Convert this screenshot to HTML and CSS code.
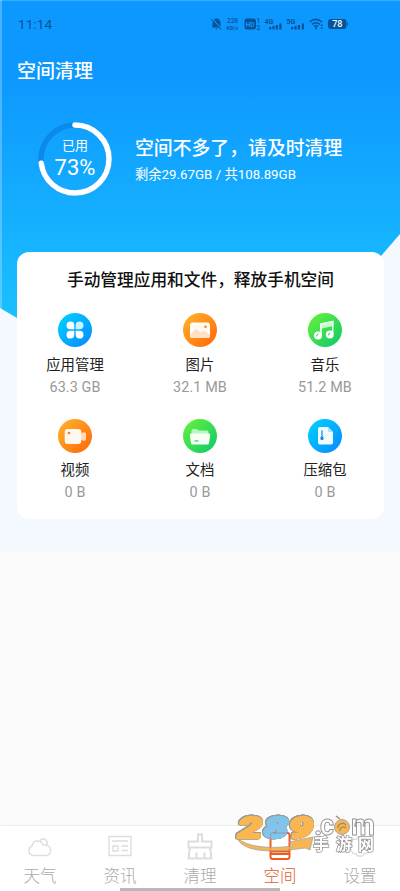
FILE: index.html
```html
<!DOCTYPE html>
<html lang="zh-CN">
<head>
<meta charset="utf-8">
<meta name="viewport" content="width=device-width, initial-scale=1">
<title>空间清理</title>
<link rel="stylesheet" href="styles.css">
</head>
<body>
<svg class="defs" width="0" height="0" aria-hidden="true">
  <defs>
    <linearGradient id="blue" x1="0" y1="0" x2="1" y2="1"><stop offset="0" stop-color="#00d5ff"/><stop offset="1" stop-color="#0588ff"/></linearGradient>
    <linearGradient id="orange" x1="0" y1="0" x2="1" y2="1"><stop offset="0" stop-color="#ffb52e"/><stop offset="1" stop-color="#ff6508"/></linearGradient>
    <linearGradient id="green" x1="0" y1="0" x2="1" y2="1"><stop offset="0" stop-color="#6af238"/><stop offset="1" stop-color="#0bc96c"/></linearGradient>
  </defs>
</svg>
<div class="app">
  <main class="page">
    <svg class="backdrop" viewBox="0 0 400 340" aria-hidden="true">
      <defs><linearGradient id="sky" x1="0" y1="0" x2="0" y2="1"><stop offset="0.22" stop-color="#0d98ff"/><stop offset="1" stop-color="#1cc3ff"/></linearGradient></defs>
      <path d="M0 0H400V234L381 256Q320 330 200 340Q80 340 17 318L0 308Z" fill="url(#sky)"/>
      <path d="M0 .5H400" stroke="#35b1fa"/>
    </svg>
    <header class="status">
      <span class="clock">11:14</span>
      <svg class="indicators" width="140" height="14" viewBox="0 0 140 14" fill="#075398">
        <path d="M2.500 9.500V5.500Q3 1.800 6.500 1.500Q10 1.800 10.500 5.500V9.500L11.500 10.500H1.500ZM5 11.500H8L6.500 12.800Z"/>
        <path d="M1.500 1.500L11.500 12" stroke="#0d98ff" stroke-width="1.500"/><path d="M1 1.800L11.500 12.800" stroke="#075398"/>
        <text x="22.500" y="6.300" class="tiny" text-anchor="middle">228</text>
        <text x="22.500" y="12.800" class="rate" text-anchor="middle">KB/s</text>
        <rect x="34.500" y="1.500" width="11.500" height="11" rx="2.500"/>
        <text x="40.200" y="9.500" class="hd" text-anchor="middle">HD</text>
        <text x="46.500" y="6.300" class="tiny">1</text><text x="46.500" y="12.800" class="tiny">2</text>
        <text x="54.500" y="7" class="net">4G</text>
        <path d="M59 10h2.200v2.500H59zM62.400 9h2.200v3.500h-2.200zM65.800 8H68v4.500h-2.200zM69.300 6.500h2.200v6h-2.200z"/>
        <text x="76.500" y="7" class="net">5G</text>
        <path d="M81 10h2.200v2.500H81zM84.400 9h2.200v3.500h-2.200zM87.800 8H90v4.500h-2.200zM91.800 6.500H94v6h-2.200z"/>
        <g fill="none" stroke="#075398" stroke-width="1.500"><path d="M99.500 5Q105.500-.2 112 5M101.800 7.400Q105.700 4 110 7.400M104 9.500Q106 8 108 9.500"/></g>
        <circle cx="106" cy="11.300" r="1.100"/><path d="M111.700 7l1.300 2h-2.600zM111.700 12.500l1.300-2h-2.600z"/>
        <rect x="118" y="2" width="18.500" height="10" rx="3"/><path d="M137 5q1 0 1 2t-1 2z"/>
        <text x="127.300" y="10.300" class="battery" text-anchor="middle">78</text>
      </svg>
    </header>
    <h1 class="title">空间清理</h1>
    <section class="summary">
      <div class="ring">
        <svg class="ring-track" width="74" height="74" viewBox="0 0 74 74" fill="none" stroke-width="5.500">
          <circle cx="37" cy="37" r="34" stroke="#0c8ae9"/>
          <circle cx="37" cy="37" r="34" stroke="#fff" stroke-linecap="round" pathLength="100" stroke-dasharray="73 100" transform="rotate(-90 37 37)"/>
        </svg>
        <span class="ring-label">已用</span>
        <span class="ring-value">73%</span>
      </div>
      <div class="message">
        <h2>空间不多了，请及时清理</h2>
        <p>剩余29.67GB / 共108.89GB</p>
      </div>
    </section>
    <section class="card">
      <h3>手动管理应用和文件，释放手机空间</h3>
      <div class="grid">
        <div class="item">
          <svg width="34" height="34" viewBox="0 0 34 34"><circle cx="17" cy="17" r="17" fill="url(#blue)"/><g fill="#fff"><path d="M16.300 16.300V12.500a3.900 3.900 0 1 0-3.900 3.800zM16.300 17.700V21.500a3.900 3.900 0 1 1-3.900-3.800zM17.700 17.700V21.500a3.900 3.900 0 1 0 3.900-3.800z"/><path d="M17.700 16.300V12.500a3.900 3.900 0 1 1 3.900 3.800z" fill="#c9f1ff"/></g></svg>
          <span class="name">应用管理</span><span class="size">63.3 GB</span>
        </div>
        <div class="item">
          <svg width="34" height="34" viewBox="0 0 34 34"><circle cx="17" cy="17" r="17" fill="url(#orange)"/><rect x="7" y="9.500" width="20" height="15.500" rx="2.500" fill="#fffaf3"/><path d="M7 22L13 15.500L18 19.500L21 17.500L27 22V22.500a2.500 2.500 0 0 1-2.500 2.500h-15A2.500 2.500 0 0 1 7 22.500z" fill="#ffe0c5"/><circle cx="22.500" cy="13.700" r="1.300" fill="#ff8617"/></svg>
          <span class="name">图片</span><span class="size">32.1 MB</span>
        </div>
        <div class="item">
          <svg width="34" height="34" viewBox="0 0 34 34"><circle cx="17" cy="17" r="17" fill="url(#green)"/><path d="M12 10.500L25.500 8V13L14 15.500V22H12z" fill="#c9f8cf"/><path d="M12.700 22V11L24.700 8.500V21" fill="none" stroke="#e8ffed" stroke-width="1.500"/><circle cx="10" cy="22.500" r="4" fill="#fff"/><circle cx="21.800" cy="21.500" r="3.900" fill="#fff"/><path d="M8.500 23.300q.2-2 2-2.300M20.300 22.300q.2-2 2-2.300" stroke="#26cf60" fill="none"/></svg>
          <span class="name">音乐</span><span class="size">51.2 MB</span>
        </div>
        <div class="item">
          <svg width="34" height="34" viewBox="0 0 34 34"><circle cx="17" cy="17" r="17" fill="url(#orange)"/><path d="M22.500 15.500l1.500-2h3q1 0 1 1v6q0 1-1 1h-3l-1.500-2z" fill="#ffd9b7"/><rect x="6.700" y="10" width="16.500" height="15" rx="3" fill="#fff8ef"/><circle cx="11" cy="14" r="1.300" fill="#ff7619"/></svg>
          <span class="name">视频</span><span class="size">0 B</span>
        </div>
        <div class="item">
          <svg width="34" height="34" viewBox="0 0 34 34"><circle cx="17" cy="17" r="17" fill="url(#green)"/><path d="M8.500 20V11.500q0-1.500 1.500-1.500h4l1.500 1.500h8.500q1.500 0 1.500 1.500v7z" fill="#b9f6c2"/><path d="M8.200 14.500h17.600q1.700 0 1.400 1.500l-1.200 8q-.2 1.500-1.700 1.500H9.700q-1.500 0-1.700-1.500L6.800 16q-.3-1.500 1.400-1.500z" fill="#f6fff7"/><path d="M11.500 22h4" stroke="#28cd62" stroke-width="1.200"/></svg>
          <span class="name">文档</span><span class="size">0 B</span>
        </div>
        <div class="item">
          <svg width="34" height="34" viewBox="0 0 34 34"><circle cx="17" cy="17" r="17" fill="url(#blue)"/><path d="M12 8h8l5 5v10.500q0 2-2 2H12q-2 0-2-2V10q0-2 2-2z" fill="#effbff"/><path d="M20 8v3.500q0 1.500 1.500 1.500H25z" fill="#a9e2ff"/><path d="M13 11.500l2 1-2 1 2 1-2 1 2 1-2 1" fill="none" stroke="#229ce9"/><rect x="12.500" y="17.500" width="3" height="3.500" rx="1" fill="#1686de"/></svg>
          <span class="name">压缩包</span><span class="size">0 B</span>
        </div>
      </div>
    </section>
  </main>
  <nav class="tabs">
    <div class="tab"><svg width="30" height="30" viewBox="0 0 30 30"><path d="M8 24.500a5 5 0 0 1-1-9.500q1-5.500 6-5q3.500.3 5 4q6-.8 7.500 4a5 5 0 0 1-4.300 6.500zM15 10a3.800 3.800 0 1 1 6 4.500"/></svg><span>天气</span></div>
    <div class="tab"><svg width="30" height="30" viewBox="0 0 30 30"><path d="M4 5.500h22v19H4zM7 10h16M8 15h5v5H8zM16.500 15H23M16.500 19.500H23"/></svg><span>资讯</span></div>
    <div class="tab"><svg width="30" height="30" viewBox="0 0 30 30" class="bold"><path d="M3.500 16.500v-6H13V3.500h4v7h9.500v6zM5 16.500L3.500 27.500h23L25 16.500M11.500 27v-5.500M19.500 27v-5.500"/></svg><span>清理</span></div>
    <div class="tab active"><svg width="30" height="30" viewBox="0 0 30 30"><path d="M7.500 2h15q2 0 2 2v22q0 2-2 2h-15q-2 0-2-2V4q0-2 2-2zM6 20.500h18M6 23h18"/></svg><span>空间</span></div>
    <div class="tab"><svg width="30" height="30" viewBox="0 0 30 30"><path d="M12.500 6h5l1 2.500 3-.5 3.500 4-2 2.500 2 3-3 5h-3l-1.500 2.500h-5L11 22.500H8l-3-5 2-3-2-2.500L8.500 8l3 .5z"/></svg><span>设置</span></div>
  </nav>
  <svg class="watermark" width="152" height="66" viewBox="0 -20 152 66">
    <path d="M2 27Q18 40 58 35L54 31L78 26L75 39L70 37Q10 46 2 27Z" fill="#f7ac3d" stroke="#999" stroke-width=".8"/>
    <g class="digits"><text x="3" y="27" textLength="24" lengthAdjust="spacingAndGlyphs" fill="#fbad39" stroke="#fbad39">2</text><text x="29" y="27" textLength="24" lengthAdjust="spacingAndGlyphs" fill="#71bde9" stroke="#71bde9">8</text><text x="54" y="27" textLength="24" lengthAdjust="spacingAndGlyphs" fill="#fbad39" stroke="#fbad39">9</text></g>
    <g class="com"><text x="79" y="24">.</text><text x="85" y="24" textLength="14" lengthAdjust="spacingAndGlyphs">c</text><text x="116" y="24" textLength="24" lengthAdjust="spacingAndGlyphs">m</text></g>
    <circle cx="107" cy="16" r="7.500" fill="#f9ae3c" stroke="#999"/><path d="M101 5l4 3M103 17a4.500 4.500 0 0 1 8-3M105 20a3.500 3.500 0 0 1 6-3" fill="none" stroke="#997d48" stroke-width="1.300"/>
    <text class="site" y="39"><tspan x="78">手</tspan><tspan x="101">游</tspan><tspan x="123">网</tspan></text>
  </svg>
  <div class="home-bar"></div>
</div>
</body>
</html>
```
FILE: styles.css
```css
* { box-sizing: border-box; }
body { margin: 0; background: #fafafa; font-family: Roboto, "Noto Sans CJK SC", sans-serif; }
h1, h2, h3, p { margin: 0; }
.defs { position: absolute; }
.app { position: relative; height: 891px; display: flex; flex-direction: column; justify-content: space-between; overflow: hidden; }
.app::after { content: ""; position: absolute; left: 0; top: 0; width: 2px; height: 100%; background: rgba(255,255,255,.25); }
.page { position: relative; height: 552px; background: #f3f9fe; }
.backdrop { position: absolute; top: 0; left: 0; width: 400px; height: 340px; }
.status, .title, .summary, .card { position: relative; }
.status { height: 48px; padding: 0 50px 0 18px; display: flex; align-items: center; justify-content: space-between; color: #075398; }
.clock { font-size: 13.5px; letter-spacing: .1px; }
.tiny { font-size: 6.5px; font-weight: 500; }
.rate { font-size: 5.5px; font-weight: 500; }
.hd { font-size: 6.5px; font-weight: 700; fill: #0d98ff; }
.net { font-size: 7px; font-weight: 700; }
.battery { font-size: 9px; font-weight: 500; fill: #fff; }
.title { padding-left: 17px; height: 44px; color: #fff; font-size: 19px; font-weight: 500; line-height: 47px; }
.summary { height: 160px; padding: 30px 0 0 38px; display: flex; gap: 23px; color: #fff; }
.ring { position: relative; width: 74px; height: 74px; display: flex; flex-direction: column; align-items: center; padding-top: 14px; }
.ring-track { position: absolute; top: 0; left: 0; }
.ring-label { font-size: 13px; line-height: 19px; }
.ring-value { font-size: 22px; line-height: 25px; }
.message { padding-top: 13px; }
.message h2 { font-size: 18.85px; font-weight: 500; line-height: 28px; white-space: nowrap; }
.message p { font-size: 13.3px; line-height: 24px; }
.card { width: 367px; height: 267px; margin-left: 17px; padding-top: 16px; background: #fff; border-radius: 12px; }
.card h3 { text-align: center; font-size: 16.7px; line-height: 26px; font-weight: 500; color: #111; white-space: nowrap; }
.grid { display: grid; grid-template-columns: repeat(3, 125px); grid-auto-rows: 105.5px; justify-content: center; padding-top: 19px; margin-left: -1px; }
.item { display: flex; flex-direction: column; align-items: center; }
.name { margin-top: 7.5px; font-size: 14.4px; line-height: 22px; color: #222; }
.size { font-size: 14.4px; line-height: 22px; color: #999; letter-spacing: .1px; }
.tabs { height: 66px; display: grid; grid-template-columns: repeat(5, 80px); background: #fff; border-top: 1px solid #eee; }
.tab { display: flex; flex-direction: column; align-items: center; padding-top: 5px; color: #aaa; font-size: 16.5px; line-height: 24px; font-weight: 300; }
.tab span { margin-top: 4px; line-height: 24px; }
.tab svg { fill: none; stroke: #ddd; stroke-width: 1.4; }
.tab svg.bold { stroke-width: 2; }
.tab.active { color: #df5c25; }
.tab.active svg { stroke: #f05b20; stroke-width: 2; }
.watermark { position: absolute; left: 235px; top: 791px; opacity: .88; }
.digits { font: italic 900 30px Roboto, sans-serif; stroke-width: 2.5; stroke-linejoin: round; filter: drop-shadow(.6px 0 0 #8d8d8d) drop-shadow(-.6px 0 0 #8d8d8d) drop-shadow(0 .6px 0 #8d8d8d) drop-shadow(0 -.6px 0 #8d8d8d); }
.com { font: 700 29px Roboto, sans-serif; fill: #fff; stroke: #888; stroke-width: 1; }
.site { font: 700 16px "Noto Sans CJK SC", sans-serif; fill: #fff; stroke: #888; stroke-width: 1.6; paint-order: stroke; }
.home-bar { position: absolute; left: 120px; bottom: 0; width: 160px; height: 3px; background: #b8b8b8; }
```
